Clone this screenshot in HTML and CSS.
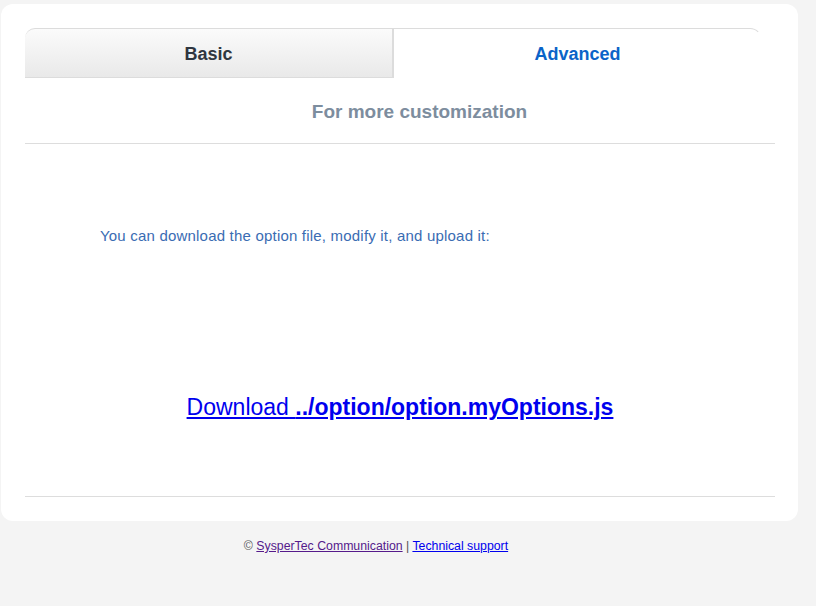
FILE: index.html
```html
<!DOCTYPE html>
<html>
<head>
<meta charset="utf-8">
<link rel="stylesheet" href="styles.css">
</head>
<body>
<div class="card">
  <div class="tabs">
    <div class="tab tab-basic">Basic</div>
    <div class="tab tab-advanced">Advanced</div>
  </div>
  <h2 class="subtitle">For more customization</h2>
  <hr class="rule">
  <p class="intro">You can download the option file, modify it, and upload it:</p>
  <p class="download"><a href="#">Download <b>../option/option.myOptions.js</b></a></p>
  <hr class="rule">
</div>
<div class="footer">© <a class="visited" href="#">SysperTec Communication</a> | <a href="#">Technical support</a></div>
</body>
</html>
```
FILE: styles.css
```css
html, body {
  margin: 0;
  padding: 0;
  background: #f4f4f4;
  font-family: "Liberation Sans", Arial, sans-serif;
}
.card {
  margin: 4px 18px 0 1px;
  background: #ffffff;
  border-radius: 12px;
  padding: 24px 23px 24px 24px;
}
.tabs {
  display: flex;
  width: 737px;
  height: 50px;
}
.tab {
  flex: 1;
  display: flex;
  align-items: center;
  justify-content: center;
  font-size: 18px;
  font-weight: bold;
  box-sizing: border-box;
  border-top: 1px solid #dcdcdc;
}
.tab-basic {
  color: #2f3640;
  background: linear-gradient(#fbfbfb, #e9e9e9);
  border-bottom: 1px solid #dcdcdc;
  border-right: 2px solid #dcdcdc;
  border-top-left-radius: 10px;
  padding-top: 2px;
}
.tab-advanced {
  color: #0b63c8;
  background: #ffffff;
  border-top-right-radius: 12px;
  border-right: 1px solid transparent;
  padding-top: 2px;
}
.subtitle {
  margin: 23px 0 0;
  padding-left: 39px;
  text-align: center;
  font-size: 19px;
  font-weight: bold;
  color: #7d8d9e;
  line-height: 22px;
}
.rule {
  margin: 20px 0 0;
  border: none;
  border-top: 1px solid #dddddd;
  height: 0;
}
.intro {
  margin: 84px 0 0 75px;
  font-size: 15px;
  letter-spacing: 0.2px;
  line-height: 16px;
  color: #3a6cb3;
}
.download {
  margin: 150px 0 0;
  text-align: center;
  font-size: 23px;
  line-height: 26px;
}
.download a {
  color: #0000ee;
}
.download + .rule {
  margin-top: 76px;
}
.footer {
  margin: 18px 0 0;
  padding-right: 64px;
  text-align: center;
  font-size: 12.3px;
  color: #555555;
}
.footer a {
  color: #0000ee;
}
.footer a.visited {
  color: #551a8b;
}
```
